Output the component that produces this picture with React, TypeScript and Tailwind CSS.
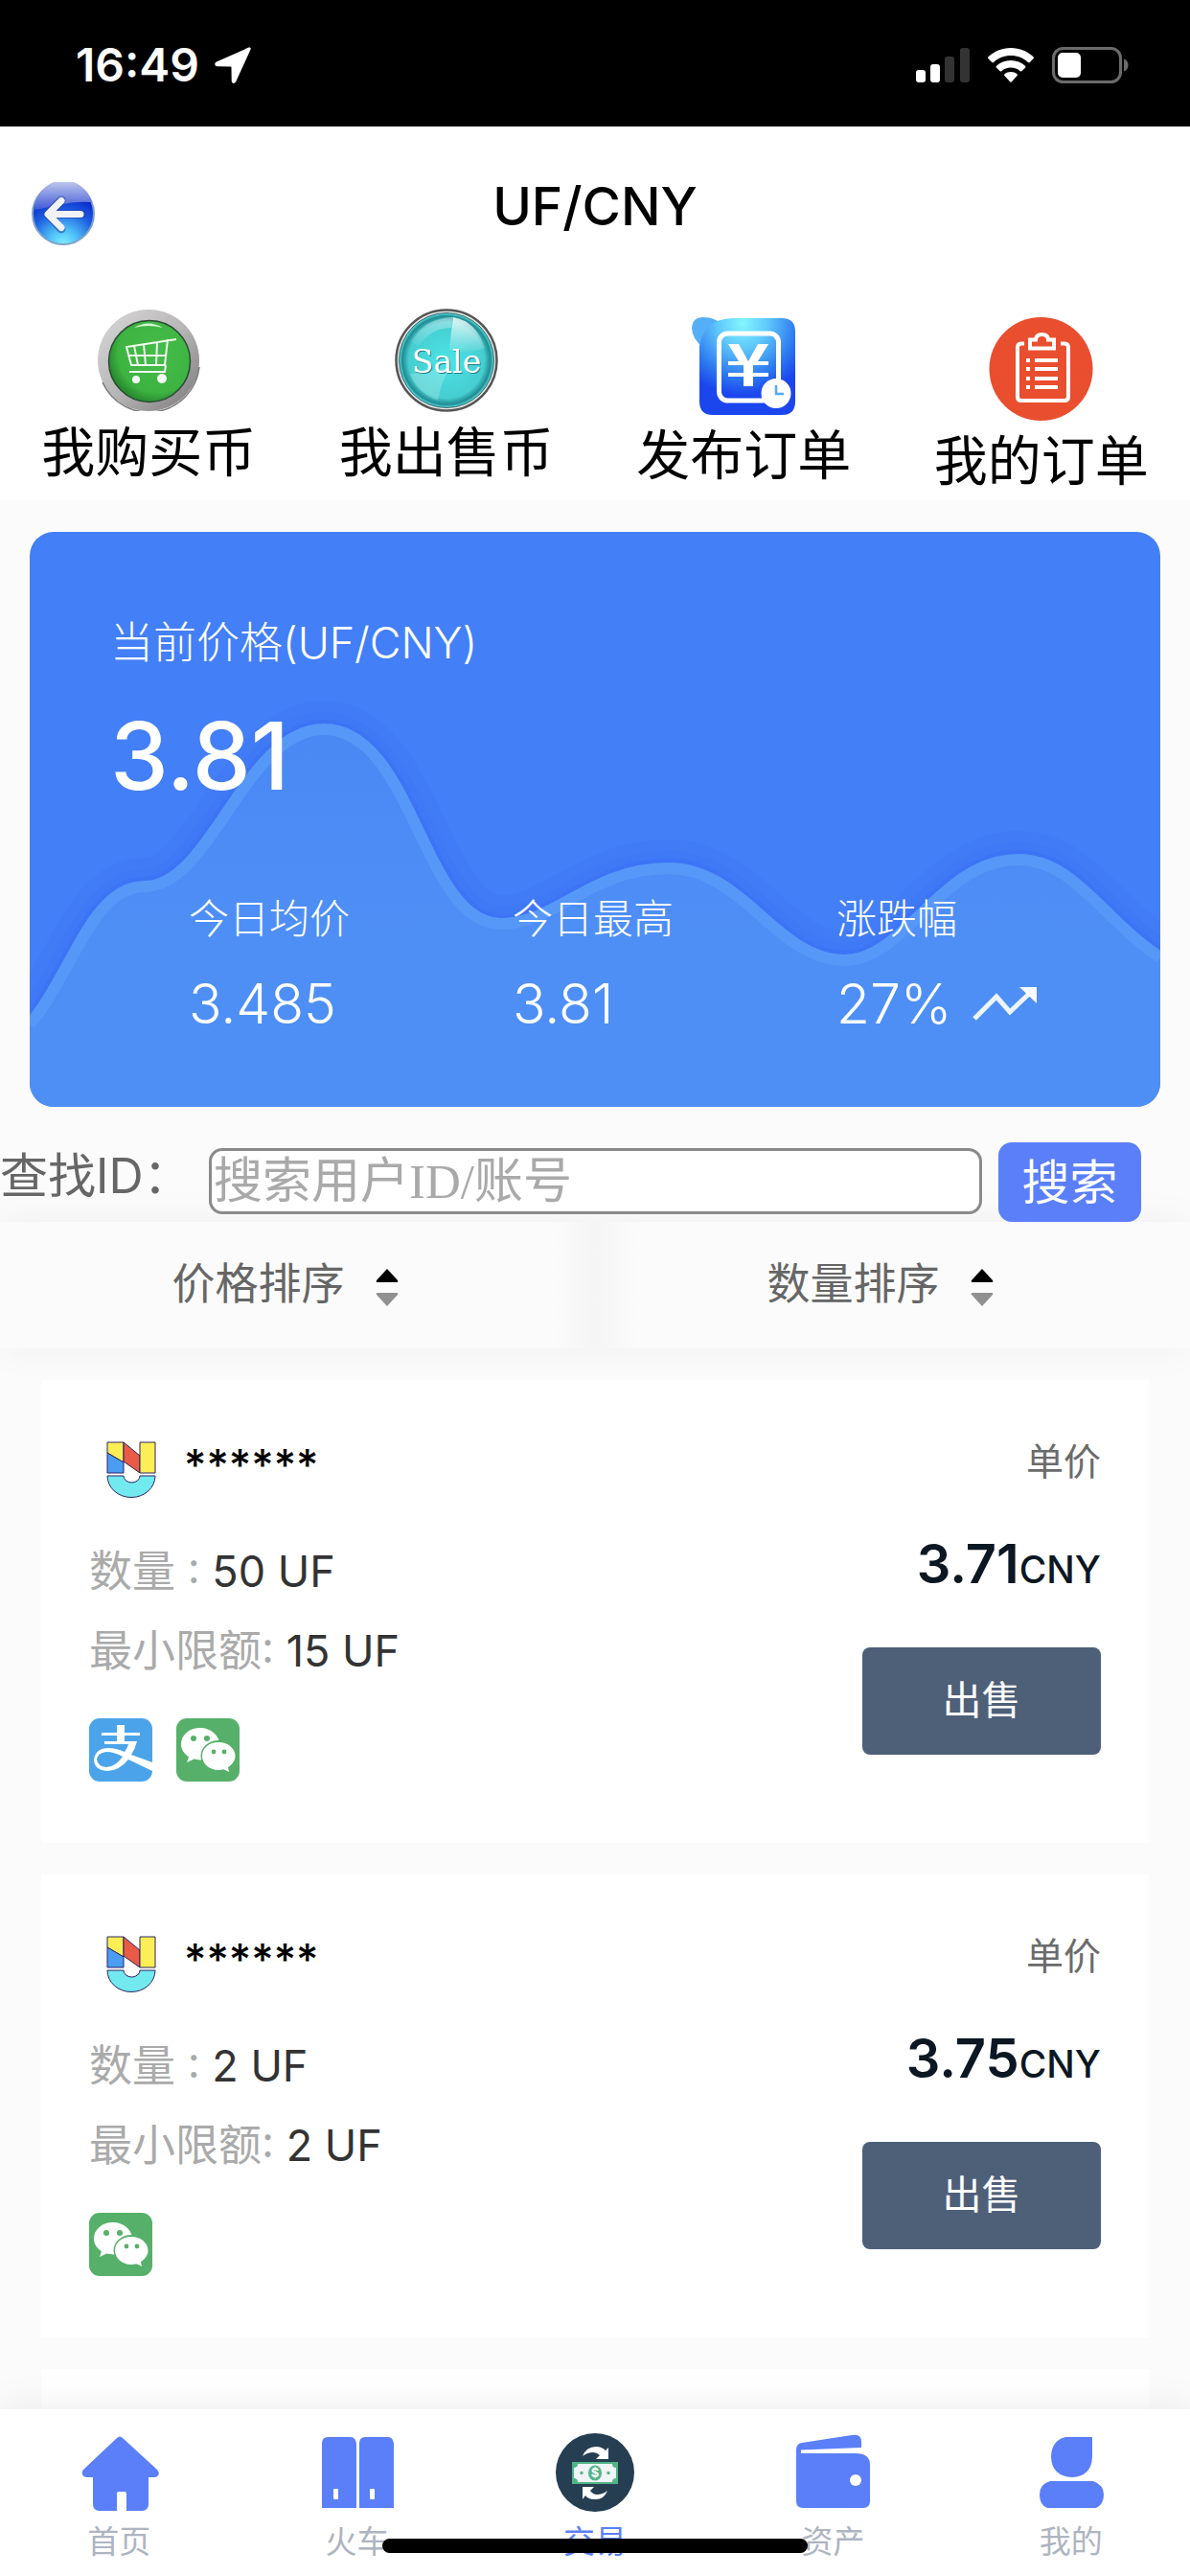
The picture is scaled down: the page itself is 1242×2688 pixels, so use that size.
import React from "react";

const sans = "font-[Inter,'Noto_Sans_CJK_SC',sans-serif]";

function StatusBar() {
  return (
    <div className="flex h-[132px] shrink-0 items-center justify-between bg-black pt-[4px] pr-[64px] pl-[79px] text-white">
      <div className="flex items-center gap-4">
        <time className="text-[48px] leading-none font-semibold">16:49</time>
        <svg className="h-[38px] w-[38px]" viewBox="0 0 38 38" fill="#fff" aria-hidden="true">
          <path d="M35.500.6 2 15.600c-2.600 1.200-2.200 4.600.8 4.700l14 .2c.5 0 .7.2.7.7l.2 14c.1 3 3.400 3.500 4.600.8L37.600 2.600C38.200 1.100 37 0 35.500.6z" />
        </svg>
      </div>
      <div className="flex items-center gap-[19px]">
        <svg className="h-[36px] w-[56px]" viewBox="0 0 56 36" aria-hidden="true">
          <rect x="0" y="23" width="10" height="13" rx="3" fill="#fff" />
          <rect x="15" y="17" width="10" height="19" rx="3" fill="#fff" />
          <rect x="30" y="9" width="10" height="27" rx="3" fill="#333" />
          <rect x="46" y="0" width="10" height="36" rx="3" fill="#333" />
        </svg>
        <svg className="h-[36px] w-[48px]" viewBox="0 0 48 36" fill="#fff" aria-hidden="true">
          <path d="M24 0C14.800 0 6.500 3.600.5 9.300c-.6.600-.6 1.300 0 1.900l3.700 3.700c.6.600 1.300.6 1.900 0C11 10.500 17 8 24 8s13 2.500 17.900 6.900c.6.600 1.300.6 1.900 0l3.700-3.700c.6-.6.6-1.300 0-1.900C41.500 3.600 33.200 0 24 0z" />
          <path d="M24 13c-5.800 0-11 2.200-15 5.800-.6.600-.6 1.300 0 1.900l3.400 3.400c.6.600 1.200.6 1.900.1 2.600-2.200 6-3.600 9.700-3.600s7.100 1.400 9.700 3.600c.7.500 1.300.5 1.900-.1l3.400-3.400c.6-.6.6-1.300 0-1.900C35 15.200 29.800 13 24 13z" />
          <path d="M24 25c-2.500 0-4.700.9-6.500 2.300-.6.500-.6 1.200-.1 1.700l5.700 6.200c.6.600 1.200.6 1.800 0l5.700-6.200c.5-.5.500-1.200-.1-1.700C28.700 25.900 26.500 25 24 25z" />
        </svg>
        <svg className="h-[38px] w-[80px]" viewBox="0 0 80 38" aria-hidden="true">
          <rect x="1.500" y="1.500" width="70" height="35" rx="10" fill="none" stroke="#6b6b6b" strokeWidth="3" />
          <rect x="6" y="6" width="24" height="26" rx="5" fill="#fff" />
          <path d="M75 12.500c3 1 4.500 3.500 4.500 6.500s-1.500 5.500-4.500 6.500z" fill="#6b6b6b" />
        </svg>
      </div>
    </div>
  );
}

function BackIcon() {
  return (
    <svg className="h-[66px] w-[66px]" viewBox="0 0 66 66" aria-hidden="true">
      <defs>
        <radialGradient id="backFill" cx="0.5" cy="1" r="0.85">
          <stop offset="0" stopColor="#7ef0ff" />
          <stop offset="0.28" stopColor="#4fc0f8" />
          <stop offset="0.65" stopColor="#1c5ee0" />
          <stop offset="1" stopColor="#0a1fc8" />
        </radialGradient>
        <linearGradient id="backGloss" x1="0" y1="0" x2="0" y2="1">
          <stop offset="0" stopColor="#c3cbee" />
          <stop offset="1" stopColor="#4059d6" />
        </linearGradient>
      </defs>
      <circle cx="33" cy="33" r="32" fill="url(#backFill)" stroke="#7fa3c8" strokeWidth="2" />
      <path d="M3 29A30.500 30.500 0 0 1 63 21Q46 20 33 23T3 29z" fill="url(#backGloss)" />
      <path d="M31 19 17 33.500 31 49M18 33.500h34" fill="none" stroke="#1b3a9c" strokeWidth="9" strokeLinecap="round" strokeLinejoin="round" opacity=".5" />
      <path d="M31 19.500 17 33.500 31 47.500M18 33.500h33" fill="none" stroke="#f1f2f6" strokeWidth="7" strokeLinecap="round" strokeLinejoin="round" />
    </svg>
  );
}

function CartIcon() {
  return (
    <svg className="h-[106px] w-[108px]" viewBox="0 0 108 106" aria-hidden="true">
      <defs>
        <linearGradient id="ring" x1="0" y1="0" x2="1" y2="1">
          <stop offset="0" stopColor="#d9d9d9" />
          <stop offset="0.5" stopColor="#b9b6b8" />
          <stop offset="0.85" stopColor="#8d8a8c" />
          <stop offset="1" stopColor="#555" />
        </linearGradient>
        <radialGradient id="green" cx="0.6" cy="0.4" r="0.65">
          <stop offset="0" stopColor="#46bd4a" />
          <stop offset="0.75" stopColor="#3db341" />
          <stop offset="1" stopColor="#22802a" />
        </radialGradient>
      </defs>
      <circle cx="54" cy="53" r="53" fill="url(#ring)" />
      <path d="M6 76A53 53 0 0 0 107 60" fill="none" stroke="#444" strokeWidth="1.500" opacity=".7" />
      <circle cx="55" cy="54" r="42.500" fill="url(#green)" stroke="#2b4a35" strokeWidth="1.500" />
      <path d="M39 19q15-9 30 0-15-4-30 0z" fill="#d8f5d6" />
      <path d="M83 31 31 39l5 19h35l3-27M33 48h40M39 38l4 20M49 36l2 22M63 34l-1 24M34 65h37l1-7" fill="none" stroke="#f1fbf0" strokeWidth="2" />
      <circle cx="41" cy="73" r="4" fill="#f4fbf4" />
      <circle cx="68" cy="72" r="5" fill="#f4fbf4" />
    </svg>
  );
}

function SaleIcon() {
  return (
    <svg className="h-[108px] w-[110px]" viewBox="0 0 110 108" aria-hidden="true">
      <defs>
        <radialGradient id="teal" cx="0.5" cy="0.5" r="0.5">
          <stop offset="0" stopColor="#4ce4e6" />
          <stop offset="0.8" stopColor="#46cdd0" />
          <stop offset="0.93" stopColor="#1f8c92" />
          <stop offset="1" stopColor="#5ce5e5" />
        </radialGradient>
        <linearGradient id="tealGloss" x1="0" y1="0" x2="0" y2="1">
          <stop offset="0" stopColor="#fff" stopOpacity=".85" />
          <stop offset="1" stopColor="#fff" stopOpacity=".08" />
        </linearGradient>
      </defs>
      <circle cx="55" cy="54" r="52.500" fill="#e9e9e9" stroke="#555" strokeWidth="2.500" />
      <circle cx="55" cy="54" r="49.500" fill="url(#teal)" stroke="#39666a" strokeWidth="1" />
      <path d="M62 9q24 4 33 32Q80 48 58 43q2-20 4-34z" fill="url(#tealGloss)" />
      <path d="M18 34Q32 10 62 9l-2 11Q38 20 26 40z" fill="url(#tealGloss)" opacity=".5" />
      <path d="M46 96Q49 78 58 62L17 68Q24 88 46 96z" fill="#fff" opacity=".22" />
      <text x="56" y="68" textAnchor="middle" fontFamily="'DejaVu Serif',serif" fontSize="33" fill="#237f86">Sale</text>
      <text x="55" y="67" textAnchor="middle" fontFamily="'DejaVu Serif',serif" fontSize="33" fill="#fff">Sale</text>
    </svg>
  );
}

function PublishIcon() {
  return (
    <svg className="h-[102px] w-[109px]" viewBox="0 0 109 102" aria-hidden="true">
      <defs>
        <radialGradient id="blueTile" cx="0.45" cy="0.05" r="0.75">
          <stop offset="0" stopColor="#84f6ff" />
          <stop offset="0.35" stopColor="#5fc8fa" />
          <stop offset="0.75" stopColor="#2c78f0" />
          <stop offset="1" stopColor="#1b46ee" />
        </radialGradient>
      </defs>
      <path d="M0 11Q1 0 12 0 24 0 32 8L12 32Q0 22 0 11z" fill="#54aef8" />
      <path d="M8 30Q14 1 44 1H94Q108 1 108 15V88Q108 102 94 102H22Q8 102 8 88z" fill="url(#blueTile)" />
      <rect x="28.500" y="17" width="62" height="70" rx="9" fill="none" stroke="#fff" strokeWidth="5" />
      <path d="M38 28h11l10 18 10-18h11L69 46h11v4H64v8h16v4H64v10h-10V62H38v-4h16v-8H38v-4h11z" fill="#fff" />
      <circle cx="88" cy="79.500" r="15.500" fill="#fff" />
      <path d="M88 71v9h8" fill="none" stroke="#56a8f5" strokeWidth="2.500" />
    </svg>
  );
}

function OrdersIcon() {
  return (
    <svg className="h-[108px] w-[109px]" viewBox="0 0 109 108" aria-hidden="true">
      <circle cx="54.500" cy="54" r="54" fill="#e94e2f" />
      <g fill="none" stroke="#fff" strokeWidth="4">
        <path d="M37 27.500h-3q-4 0-4 4V83q0 4 4 4h45q4 0 4-4V31.500q0-4-4-4h-4" />
        <path d="M43 32.500V23.500h6q0-5.500 6.500-5.500t6.500 5.500h6v9z" />
      </g>
      <path d="M39 43h4v4h-4zm0 9h4v4h-4zm0 10h4v4h-4zm0 9h4v4h-4zM48 43h24v4H48zm0 9h24v4H48zm0 10h24v4H48zm0 9h24v4H48z" fill="#fff" />
    </svg>
  );
}

const shortcuts = [
  { label: "我购买币", icon: <CartIcon />, box: "pt-[40px] gap-[1px]" },
  { label: "我出售币", icon: <SaleIcon />, box: "pt-[39px]" },
  { label: "发布订单", icon: <PublishIcon />, box: "pt-[48px]" },
  { label: "我的订单", icon: <OrdersIcon />, box: "pt-[48px]" },
];

const stats = [
  { label: "今日均价", value: "3.485", rising: false },
  { label: "今日最高", value: "3.81", rising: false },
  { label: "涨跌幅", value: "27%", rising: true },
];

function PriceCard() {
  const curve =
    "M0 514C45 460 65 370 120 370C190 370 225 206 307 206C400 206 410 409 492 409C550 409 585 351 667 351C745 351 780 447 850 447C915 447 950 342 1032 342C1090 342 1120 405 1180 444";
  return (
    <section className="relative mx-[31px] shrink-0 overflow-hidden rounded-[25px] bg-[#437ff6] text-white">
      <svg className="absolute inset-0 h-full w-full" viewBox="0 0 1180 600" preserveAspectRatio="none" aria-hidden="true">
        <defs>
          <linearGradient id="area" x1="0" y1="200" x2="0" y2="420" gradientUnits="userSpaceOnUse">
            <stop offset="0" stopColor="#4a88f4" />
            <stop offset="1" stopColor="#4e8ff6" />
          </linearGradient>
        </defs>
        <path d={curve} fill="none" stroke="#3f78f4" strokeWidth="60" opacity=".3" />
        <path d={curve} fill="none" stroke="#3d73f4" strokeWidth="36" opacity=".3" />
        <path d={curve} fill="none" stroke="#3a6ff4" strokeWidth="20" opacity=".4" />
        <path d={`${curve}V600H0z`} fill="url(#area)" />
        <path d={curve} fill="none" stroke="#5698f8" strokeWidth="12" />
      </svg>
      <div className="relative flex h-[600px] flex-col pt-[83px] pl-[84px]">
        <h2 className="text-[45px] leading-[66px] font-light">当前价格(UF/CNY)</h2>
        <p className="mt-[25px] text-[97px] leading-[120px] font-medium">3.81</p>
        <dl className="mt-[79px] grid grid-cols-3 pl-[82px] font-light">
          {stats.map((s) => (
            <div key={s.label}>
              <dt className="text-[42px] leading-[62px]">{s.label}</dt>
              <dd className="mt-[16px] flex items-center gap-[22px] text-[57px] leading-[84px]">
                {s.value}
                {s.rising && (
                  <svg className="h-[38px] w-[68px]" viewBox="0 0 68 38" aria-hidden="true">
                    <path d="M2 34 25 11 39 27 60 7" fill="none" stroke="#fff" strokeWidth="5" opacity=".9" />
                    <path d="M49 1h18v17z" fill="#fff" opacity=".95" />
                  </svg>
                )}
              </dd>
            </div>
          ))}
        </dl>
      </div>
    </section>
  );
}

function SortButton({ label, shade }: { label: string; shade: string }) {
  return (
    <button type="button" className={`flex h-[132px] items-center justify-center gap-[32px] from-[#fbfbfb] from-93% to-[#f5f5f5] pr-[26px] pb-[2px] text-[45px] text-[#666] ${shade}`}>
      {label}
      <svg className="mt-[7px] h-[40px] w-[24px]" viewBox="0 0 24 40" aria-hidden="true">
        <path d="M12 0 23 12q1 2-1 2H2q-2 0-1-2z" fill="#000" />
        <path d="M12 39 23 27q1-2-1-2H2q-2 0-1 2z" fill="#909090" />
      </svg>
    </button>
  );
}

function CoinLogo() {
  return (
    <svg className="h-[60px] w-[52px]" viewBox="0 0 52 60" stroke="#2a2560" strokeWidth="1" strokeLinejoin="round" aria-hidden="true">
      <path d="M1 1h17v21L1 12z" fill="#fcee55" />
      <path d="M1 12l17 10v11H1z" fill="#4a9df3" />
      <path d="M18 1l17 14v18L18 21z" fill="#ea5a47" />
      <path d="M35 1h16v32H35z" fill="#fcee55" />
      <path d="M1 36h17a8.500 7 0 0 0 17 0h16a25 22.500 0 0 1-50 0z" fill="#72e9ef" />
    </svg>
  );
}

function AlipayIcon() {
  return (
    <svg className="h-[66px] w-[66px]" viewBox="0 0 66 66" role="img" aria-label="支付宝">
      <rect width="66" height="66" rx="11" fill="#4ba4ea" />
      <path d="M29 7h8v8h16v3H37v6h13q-2 8-6 14l22 8v9L41 43Q31 55 19 55 5 54 5 43 7 31 20 31q8 0 17 4 3-4 4-8H16v-3h13v-6H13v-3h16z" fill="#fff" />
      <path d="M35 40Q26 35 18 35q-9 1-10 8 1 7 10 8 9 0 17-11z" fill="#4ba4ea" />
    </svg>
  );
}

function WechatIcon() {
  return (
    <svg className="h-[66px] w-[66px]" viewBox="0 0 66 66" role="img" aria-label="微信支付">
      <rect width="66" height="66" rx="11" fill="#56b069" />
      <path d="M25 10C13.500 10 5 17.500 5 27c0 5.500 3 10 8 13.200L11 46l7.500-3.400q3 .8 6.500.8C36 43.400 45 36 45 27S36 10 25 10z" fill="#fff" />
      <ellipse cx="44" cy="39" rx="18.500" ry="16" fill="#56b069" />
      <path d="M44 25c-9.500 0-17 6-17 14.300S34.500 54 44 54q3 0 5.500-.7L55 56l-1-5c4.300-2.700 7.500-6.500 7.500-11.700C61.500 31 53.500 25 44 25z" fill="#fff" />
      <g fill="#56b069">
        <circle cx="18" cy="21" r="3" />
        <circle cx="32" cy="21" r="3" />
        <circle cx="39" cy="35" r="2.400" />
        <circle cx="50" cy="35" r="2.400" />
      </g>
    </svg>
  );
}

type Offer = { amount: string; min: string; price: string; alipay: boolean };

const offers: Offer[] = [
  { amount: "50 UF", min: "15 UF", price: "3.71", alipay: true },
  { amount: "2 UF", min: "2 UF", price: "3.75", alipay: false },
];

function OfferCard({ amount, min, price, alipay }: Offer) {
  return (
    <article className="flex h-[483px] justify-between bg-white px-[50px] pt-[64px]">
      <div>
        <div className="flex items-start gap-[29px] pl-[18px]">
          <CoinLogo />
          <span className="text-[45px] leading-[50px] font-medium">******</span>
        </div>
        <p className="mt-[41px] text-[45px] leading-[70px] text-[#333]">
          <span className="text-[#aaa]">数量 : </span>
          {amount}
        </p>
        <p className="mt-[13px] text-[45px] leading-[70px] text-[#333]">
          <span className="text-[#aaa]">最小限额: </span>
          {min}
        </p>
        <div className="mt-[35px] flex gap-[25px]">
          {alipay && <AlipayIcon />}
          <WechatIcon />
        </div>
      </div>
      <div className="flex flex-col items-end">
        <span className="text-[39px] leading-[42px] text-[#6b6b6b]">单价</span>
        <p className="mt-[50px] flex h-[72px] items-baseline text-[56px] leading-[72px] font-semibold text-[#0b1722]">
          {price}
          <span className="text-[39px] font-medium">CNY</span>
        </p>
        <button type="button" className="mt-[51px] h-[112px] w-[249px] rounded-[8px] bg-[#4e5f78] text-[41px] text-white">
          出售
        </button>
      </div>
    </article>
  );
}

function HomeIcon() {
  return (
    <svg className="h-[84px] w-[84px]" viewBox="0 0 84 84" fill="#5b7ff9" aria-hidden="true">
      <path d="M40 6q3-3 6 0L82 39q3 4 1 6-1 2-4 2h-6v28q0 6-6 7H50V64q0-2-2-2h-6q-2 0-2 2v18H21q-6-1-6-7V47H9q-4 0-5-3-1-3 1-5z" />
    </svg>
  );
}

function LockerIcon() {
  return (
    <svg className="h-[84px] w-[84px]" viewBox="0 0 84 84" aria-hidden="true">
      <path d="M5 12q0-7 6-7h24q5 0 6 7v67H5zM44 12q0-7 6-7h24q5 0 6 7v67H44z" fill="#5b7ff9" />
      <path d="M18 60h3v9h-3zM56 60h3v9h-3z" fill="#fff" stroke="#fff" strokeWidth="2" strokeLinejoin="round" />
    </svg>
  );
}

function ExchangeIcon() {
  return (
    <svg className="h-[84px] w-[84px]" viewBox="0 0 84 84" aria-hidden="true">
      <circle cx="42" cy="42" r="41" fill="#263e52" />
      <path d="M29 25Q33 15 43 15q6 0 10 4l3-3v12H43l4-4q-3-3-7-3-6 0-11 4z" fill="#fff" />
      <path d="M55 61q-4 10-14 9-6 0-9-4l-3 4V57h12l-4 4q3 4 7 4 6 0 11-4z" fill="#fff" />
      <rect x="18" y="31" width="48" height="23" fill="#51b586" />
      <path d="M24 33h36q0 4 4 4v11q-4 0-4 4H24q0-4-4-4V37q4 0 4-4z" fill="#f0f4f6" />
      <ellipse cx="42" cy="42.500" rx="7" ry="8" fill="#51b586" />
      <text x="42" y="47" textAnchor="middle" fontFamily="Inter" fontWeight="700" fontSize="13" fill="#fff">$</text>
      <circle cx="28" cy="42.500" r="1.700" fill="#51b586" />
      <circle cx="56" cy="42.500" r="1.700" fill="#51b586" />
    </svg>
  );
}

function WalletIcon() {
  return (
    <svg className="h-[84px] w-[84px]" viewBox="0 0 84 84" fill="#5b7ff9" aria-hidden="true">
      <path d="M4 18q0-6 6-7L62 3q10-2 10 7v6L9 18.500V22h57q15 0 15 12v38q0 7-7 7H11q-7 0-7-7z" />
      <circle cx="66" cy="50" r="6" fill="#fff" />
    </svg>
  );
}

function PersonIcon() {
  return (
    <svg className="h-[84px] w-[84px]" viewBox="0 0 84 84" fill="#5b7ff9" aria-hidden="true">
      <path d="M36 5h28v21q-1 20-21 21-21-1-22-21Q21 9 36 5z" />
      <path d="M20 51h45q11 4 11 14t-8 14H17Q9 76 9 65t11-14z" />
    </svg>
  );
}

const tabs = [
  { label: "首页", icon: <HomeIcon />, active: false },
  { label: "火车", icon: <LockerIcon />, active: false },
  { label: "交易", icon: <ExchangeIcon />, active: true },
  { label: "资产", icon: <WalletIcon />, active: false },
  { label: "我的", icon: <PersonIcon />, active: false },
];

export default function App() {
  return (
    <div className={`flex h-screen flex-col overflow-hidden bg-[#fbfbfb] text-black ${sans}`}>
      <StatusBar />
      <header className="grid h-[151px] shrink-0 grid-cols-[1fr_auto_1fr] items-start bg-white px-[33px] pt-[51px]">
        <button type="button" aria-label="返回" className="mt-[7px] justify-self-start">
          <BackIcon />
        </button>
        <h1 className="text-[55px] leading-[64px] font-medium">UF/CNY</h1>
      </header>
      <nav className="grid h-[239px] shrink-0 grid-cols-4 bg-white">
        {shortcuts.map((s) => (
          <a key={s.label} href="#" className={`flex flex-col items-center ${s.box}`}>
            {s.icon}
            <span className="text-[56px] leading-[84px]">{s.label}</span>
          </a>
        ))}
      </nav>
      <main className="flex min-h-0 grow flex-col overflow-hidden pt-[33px]">
        <PriceCard />
        <form className="relative z-10 flex h-[120px] shrink-0 items-end pr-[51px]" onSubmit={(e) => e.preventDefault()}>
          <label htmlFor="uid" className="mb-[12px] w-[218px] shrink-0 text-[50px] leading-[72px] text-[#666]">
            查找ID：
          </label>
          <input
            id="uid"
            placeholder="搜索用户ID/账号"
            className="mb-[8px] h-[69px] min-w-0 grow rounded-[14px] border-3 border-[#8a8a8a] bg-white px-[2px] font-['Liberation_Serif','Noto_Sans_CJK_SC',serif] text-[51px] leading-[60px] placeholder:text-[#a9a9a9]"
          />
          <button type="submit" className="ml-[17px] h-[83px] w-[149px] shrink-0 rounded-[14px] bg-[#5b7ff9] text-[50px] leading-none text-white">
            搜索
          </button>
        </form>
        <div className="grid shrink-0 grid-cols-2 shadow-[0_0_40px_rgba(0,0,0,0.05)]">
          <SortButton label="价格排序" shade="bg-linear-to-r" />
          <SortButton label="数量排序" shade="bg-linear-to-l" />
        </div>
        <div className="relative flex flex-col gap-[33px] px-[43px] pt-[33px]">
          {offers.map((o) => (
            <OfferCard key={o.price} {...o} />
          ))}
          <div className="h-[60px] bg-white" />
        </div>
      </main>
      <nav className="relative grid h-[174px] shrink-0 grid-cols-5 bg-white shadow-[0_0_40px_rgba(0,0,0,0.08)]">
        {tabs.map((t) => (
          <a key={t.label} href="#" className="flex flex-col items-center pt-[24px]">
            {t.icon}
            <span className={t.active ? "mt-[6px] text-[33px] leading-[48px] text-[#5b7ff9]" : "mt-[6px] text-[33px] leading-[48px] text-[#aeb4c0]"}>{t.label}</span>
          </a>
        ))}
        <div className="absolute bottom-[24px] left-1/2 h-[15px] w-[444px] -translate-x-1/2 rounded-full bg-black" />
      </nav>
    </div>
  );
}
